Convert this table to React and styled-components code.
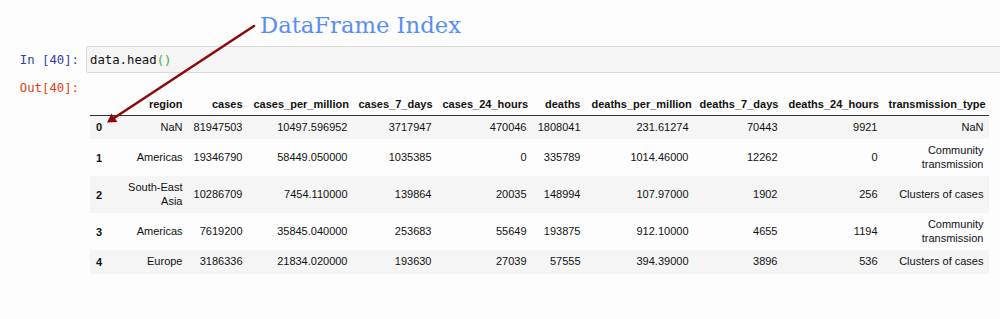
import React from 'react';
import styled, { createGlobalStyle } from 'styled-components';

const GlobalStyle = createGlobalStyle`
    html, body {
        margin: 0;
        padding: 0;
        background: #fdfdfd;
    }
    body {
        width: 1000px;
        height: 319px;
        overflow: hidden;
    }
`;

const Page = styled.div`
    position: relative;
    width: 1000px;
    height: 319px;
    overflow: hidden;
    padding-top: 12px;
    box-sizing: border-box;
`;

const Caption = styled.div`
    margin-left: 260px;
    height: 34px;
    font-family: 'DejaVu Serif', 'Liberation Serif', serif;
    font-size: 22.7px;
    line-height: 27px;
    color: #5a8ef4;
`;

const CellRow = styled.div`
    display: flex;
    align-items: flex-start;
`;

const Prompt = styled.div`
    width: 86px;
    flex: none;
    box-sizing: border-box;
    padding-right: 7px;
    text-align: right;
    font-family: 'DejaVu Sans Mono', monospace;
    font-size: 12.3px;
    line-height: 15px;
    padding-top: ${props => props.$top}px;
    color: ${props => props.$out ? '#d84315' : '#303f9f'};
`;

const InputBox = styled.div`
    flex: 1;
    margin-right: -6px;
    height: 27px;
    box-sizing: border-box;
    padding: 6px 0 0 3px;
    background: #f5f5f5;
    border: 1px solid #d9d9d9;
    border-radius: 2px;
    font-family: 'DejaVu Sans Mono', monospace;
    font-size: 12.3px;
    line-height: 15px;
    color: #111;
`;

const Bracket = styled.span`
    color: #3cab3c;
`;

const Output = styled(CellRow)`
    margin-top: 6px;
`;

const Table = styled.table`
    margin-top: 13px;
    margin-left: 4px;
    border-collapse: collapse;
    table-layout: fixed;
    width: 899px;
    font-family: 'Liberation Sans', Arial, sans-serif;
    font-size: 11px;
    color: #111;
`;

const Head = styled.th`
    text-align: right;
    font-weight: bold;
    padding: 5.5px 5.5px 5px;
    border-bottom: 1px solid #333;
    white-space: nowrap;
`;

const Row = styled.tr`
    background: ${props => props.$odd ? 'transparent' : '#f5f5f5'};
`;

const IndexCell = styled.th`
    text-align: right;
    font-weight: bold;
    padding: 5px 6px;
`;

const Cell = styled.td`
    text-align: right;
    vertical-align: middle;
    padding: 5px 5.5px;
    line-height: 13.5px;
`;

const Arrow = styled.svg`
    position: absolute;
    left: 0;
    top: 0;
    pointer-events: none;
`;

const widths = [18, 80, 60, 105, 84, 95, 54, 108, 89, 100, 106];

const columns = [
    'region', 'cases', 'cases_per_million', 'cases_7_days', 'cases_24_hours',
    'deaths', 'deaths_per_million', 'deaths_7_days', 'deaths_24_hours', 'transmission_type',
];

const rows = [
    ['NaN', '81947503', '10497.596952', '3717947', '470046', '1808041', '231.61274', '70443', '9921', 'NaN'],
    ['Americas', '19346790', '58449.050000', '1035385', '0', '335789', '1014.46000', '12262', '0', 'Community transmission'],
    ['South-East Asia', '10286709', '7454.110000', '139864', '20035', '148994', '107.97000', '1902', '256', 'Clusters of cases'],
    ['Americas', '7619200', '35845.040000', '253683', '55649', '193875', '912.10000', '4655', '1194', 'Community transmission'],
    ['Europe', '3186336', '21834.020000', '193630', '27039', '57555', '394.39000', '3896', '536', 'Clusters of cases'],
];

function App() {
    return (
        <Page>
            <GlobalStyle />
            <Caption>DataFrame Index</Caption>
            <CellRow>
                <Prompt $top={7}>In&nbsp;[40]:</Prompt>
                <InputBox>data.head<Bracket>()</Bracket></InputBox>
            </CellRow>
            <Output>
                <Prompt $out $top={2}>Out[40]:</Prompt>
                <Table>
                    <colgroup>
                        {widths.map((w, i) => <col key={i} style={{ width: w }} />)}
                    </colgroup>
                    <thead>
                        <tr>
                            <Head></Head>
                            {columns.map(c => <Head key={c}>{c}</Head>)}
                        </tr>
                    </thead>
                    <tbody>
                        {rows.map((r, i) => (
                            <Row key={i} $odd={i % 2 === 1}>
                                <IndexCell>{i}</IndexCell>
                                {r.map((v, j) => <Cell key={j}>{v}</Cell>)}
                            </Row>
                        ))}
                    </tbody>
                </Table>
            </Output>
            <Arrow width="1000" height="319">
                <line x1="254" y1="26" x2="114" y2="118" stroke="#8c0a0f" strokeWidth="2.6" strokeLinecap="round" />
                <polygon points="107,122.5 111.5,113.5 117.5,122" fill="#8c0a0f" />
            </Arrow>
        </Page>
    );
}

export default App;
